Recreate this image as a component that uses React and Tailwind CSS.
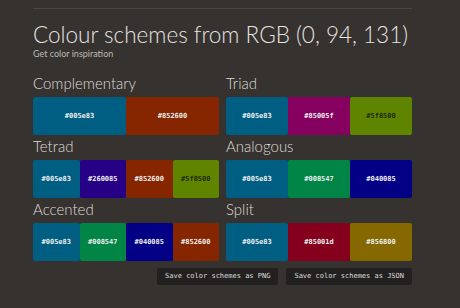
import React from 'react';

const schemes = [
  { title: "Complementary", colors: [["#005e83", "light"], ["#852600", "light"]] },
  { title: "Triad", colors: [["#005e83", "light"], ["#85005f", "light"], ["#5f8500", "dark"]] },
  { title: "Tetrad", colors: [["#005e83", "light"], ["#260085", "light"], ["#852600", "light"], ["#5f8500", "dark"]] },
  { title: "Analogous", colors: [["#005e83", "light"], ["#008547", "light"], ["#040085", "light"]] },
  { title: "Accented", colors: [["#005e83", "light"], ["#008547", "light"], ["#040085", "light"], ["#852600", "light"]] },
  { title: "Split", colors: [["#005e83", "light"], ["#85001d", "light"], ["#856800", "light"]] },
];

function Swatch({ hex, tone }) {
  return (
    <div
      className={`flex-1 h-[38px] rounded-[2px] flex items-center justify-center text-[7px] font-semibold ${
        tone === 'dark' ? 'text-[#1f2a0a]' : 'text-[#eeeeee]'
      }`}
      style={{ backgroundColor: hex }}
    >
      {hex}
    </div>
  );
}

export default function App() {
  return (
    <div className="w-[460px] h-[308px] bg-[#36322f] overflow-hidden font-['Lato',sans-serif]">
      <div className="ml-[33px] w-[379px] pt-[8px]">
        <div className="h-px bg-[#4b4643]" />

        {/* Header */}
        <h1 className="mt-[13px] text-[22.5px] leading-[26px] font-light text-[#e6e3e0] whitespace-nowrap">
          Colour schemes from RGB (0, 94, 131)
        </h1>
        <p className="text-[9px] leading-[12px] text-[#bdb9b5]">Get color inspiration</p>

        {/* Schemes */}
        <div className="mt-[12px] grid grid-cols-2 gap-x-[7px]">
          {schemes.map(s => (
            <div key={s.title}>
              <h2 className="text-[15px] leading-[22px] font-light text-[#dedbd8] mb-[3px]">{s.title}</h2>
              <div className="flex font-['DejaVu_Sans_Mono',monospace]">
                {s.colors.map(([hex, tone], i) => (
                  <Swatch key={i} hex={hex} tone={tone} />
                ))}
              </div>
            </div>
          ))}
        </div>

        {/* Actions */}
        <div className="mt-[7px] flex justify-end gap-[8px] font-['DejaVu_Sans_Mono',monospace] text-[7px] text-[#dddddd]">
          <button className="h-[17px] px-[8px] rounded-[2px] bg-[#232120]">Save color schemes as PNG</button>
          <button className="h-[17px] px-[8px] rounded-[2px] bg-[#232120]">Save color schemes as JSON</button>
        </div>
      </div>
    </div>
  );
}
